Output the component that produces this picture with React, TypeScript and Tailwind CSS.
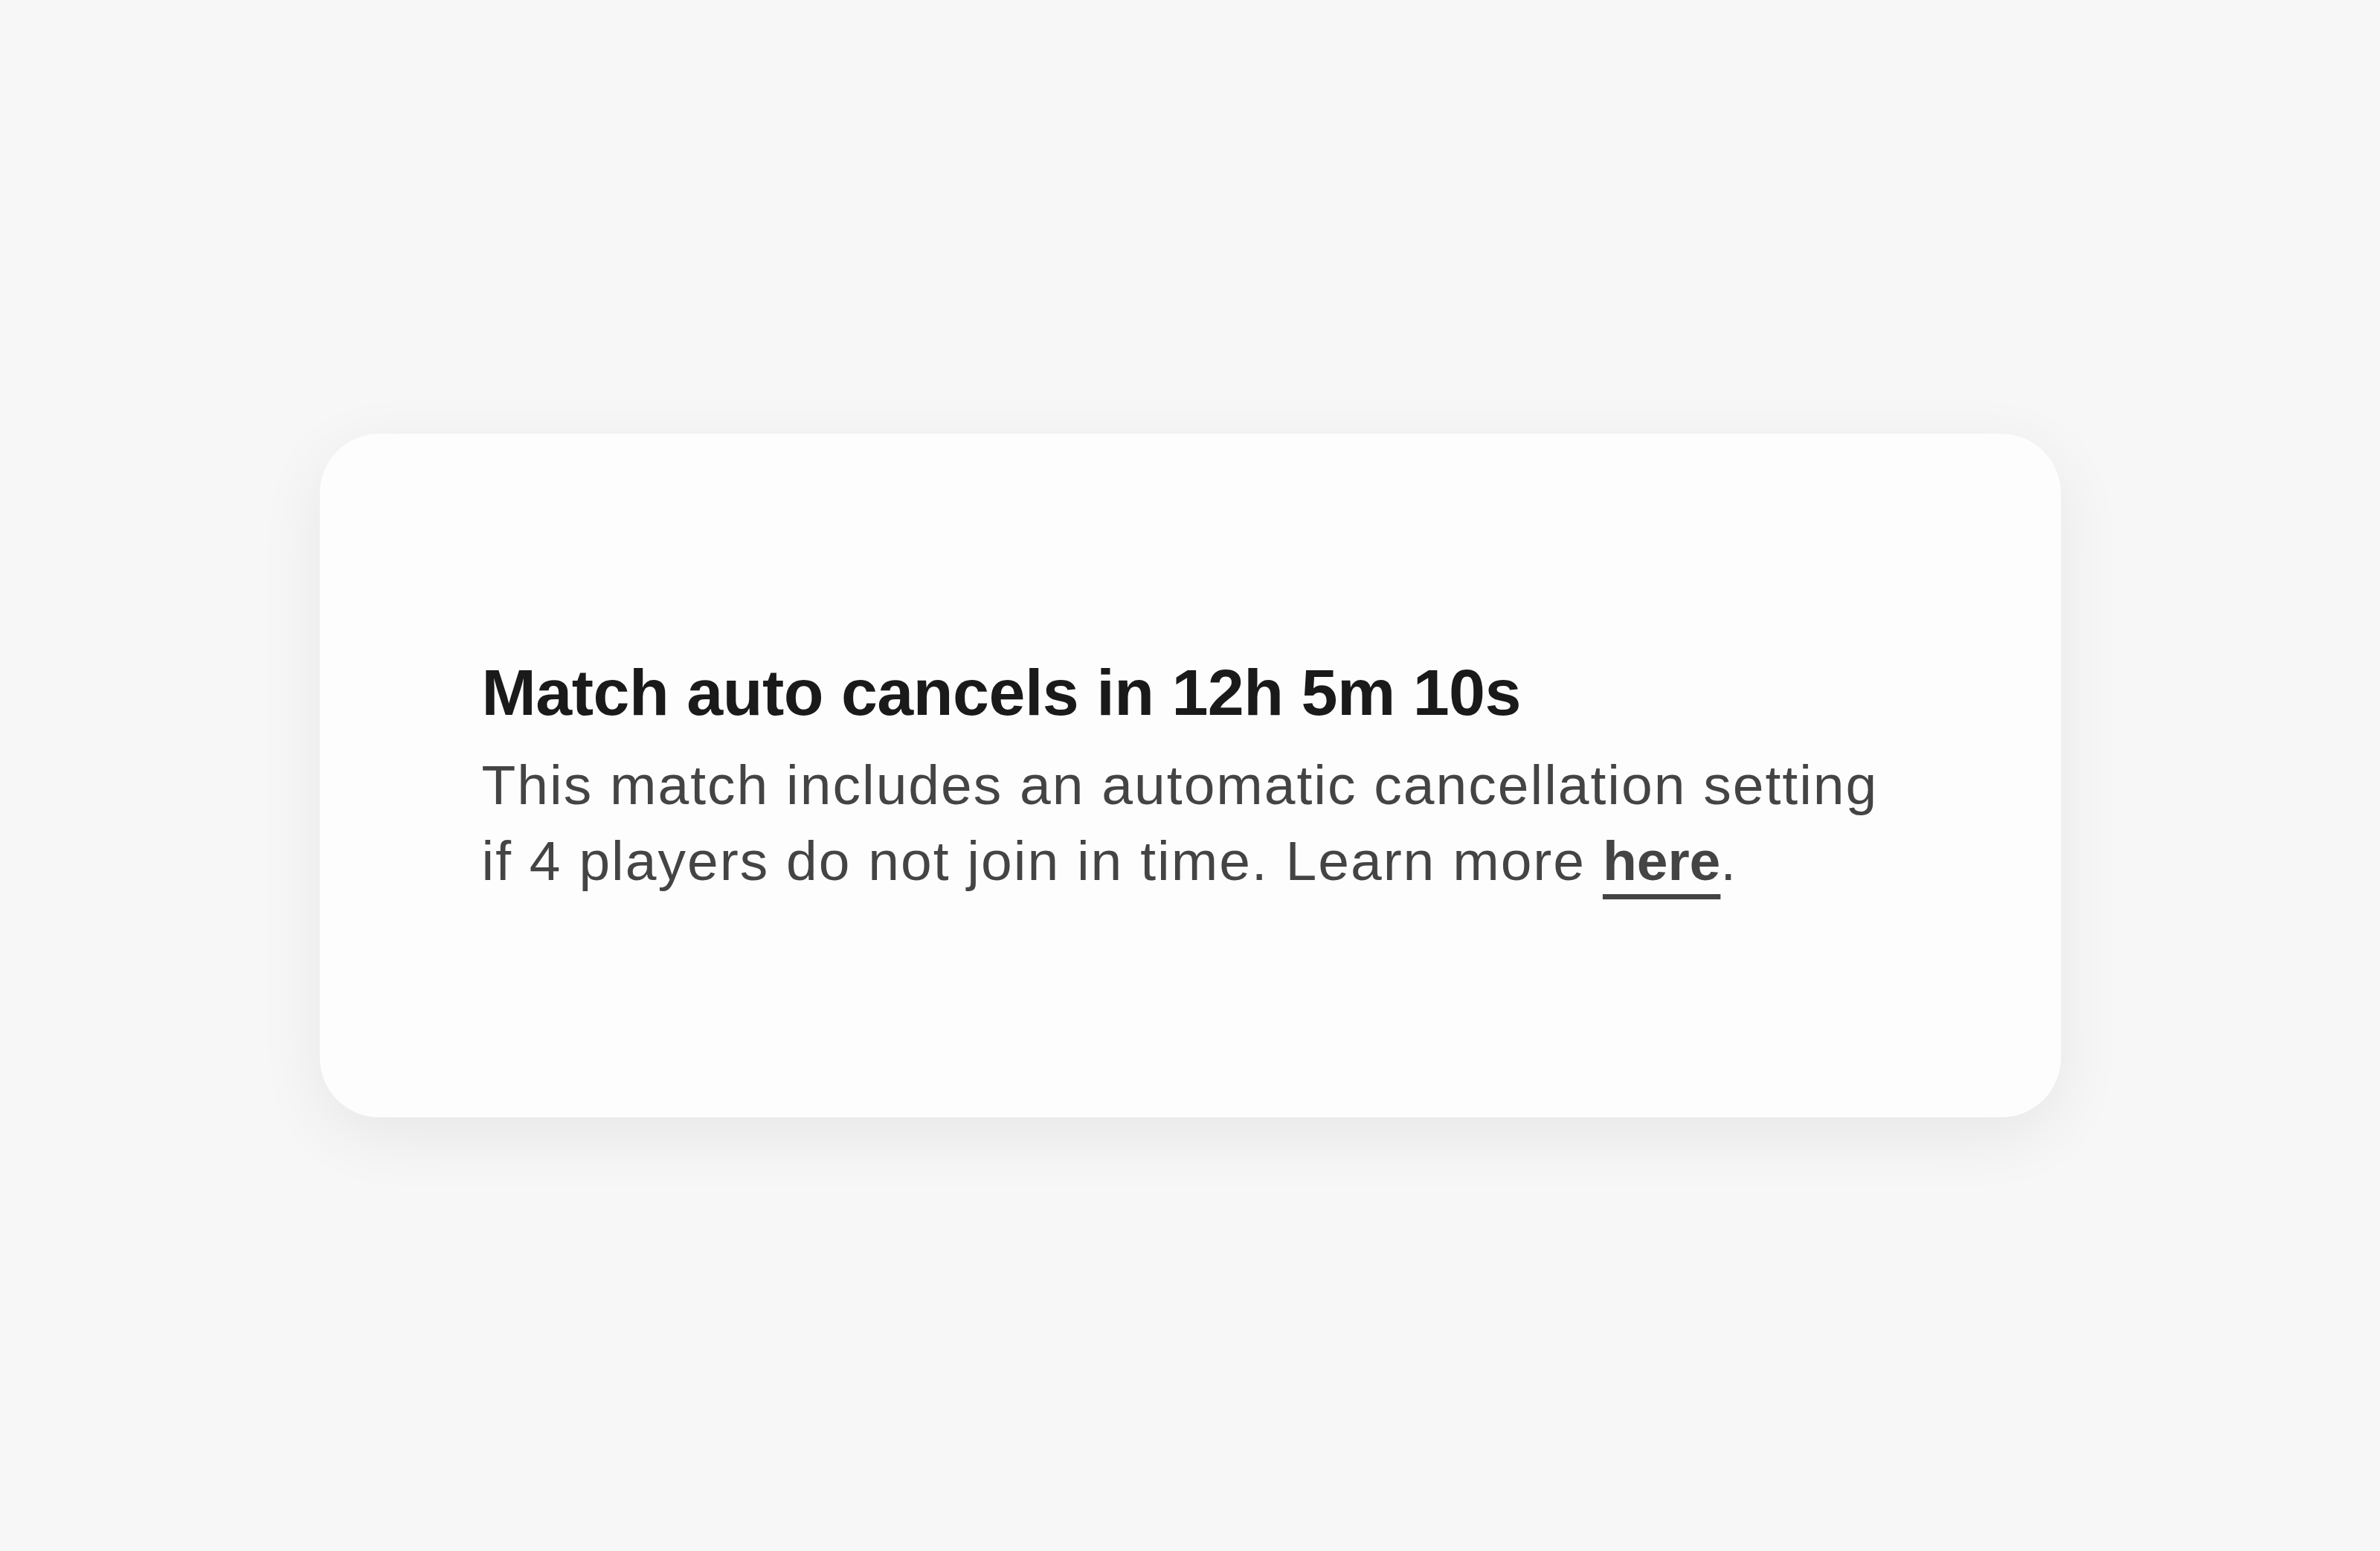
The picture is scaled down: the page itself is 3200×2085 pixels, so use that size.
import React from 'react';

export default function App() {
  return (
    <div className="min-h-screen w-full bg-[#f7f7f7] flex items-center justify-center">
      {/* auto-cancel notice card */}
      <div className="w-[2341px] h-[919px] rounded-[80px] bg-[#fdfdfd] shadow-[0_24px_90px_rgba(0,0,0,0.07)] flex flex-col justify-center pl-[218px] pr-[120px] pt-[4px]">
        <h1 className="font-['Liberation_Sans',Arial,sans-serif] font-bold text-[88px] leading-[100px] text-[#1a1a1a] tracking-[-0.5px]">
          Match auto cancels in 12h 5m 10s
        </h1>
        <p className="mt-[23px] font-['Liberation_Sans',Arial,sans-serif] text-[75px] leading-[102px] text-[#444444] tracking-[2px] max-w-[1905px]">
          This match includes an automatic cancellation setting if 4 players do not join in time. Learn more{' '}
          <a href="#" className="font-bold tracking-[0px] underline decoration-[7px] underline-offset-[19px]">
            here
          </a>
          .
        </p>
      </div>
    </div>
  );
}
